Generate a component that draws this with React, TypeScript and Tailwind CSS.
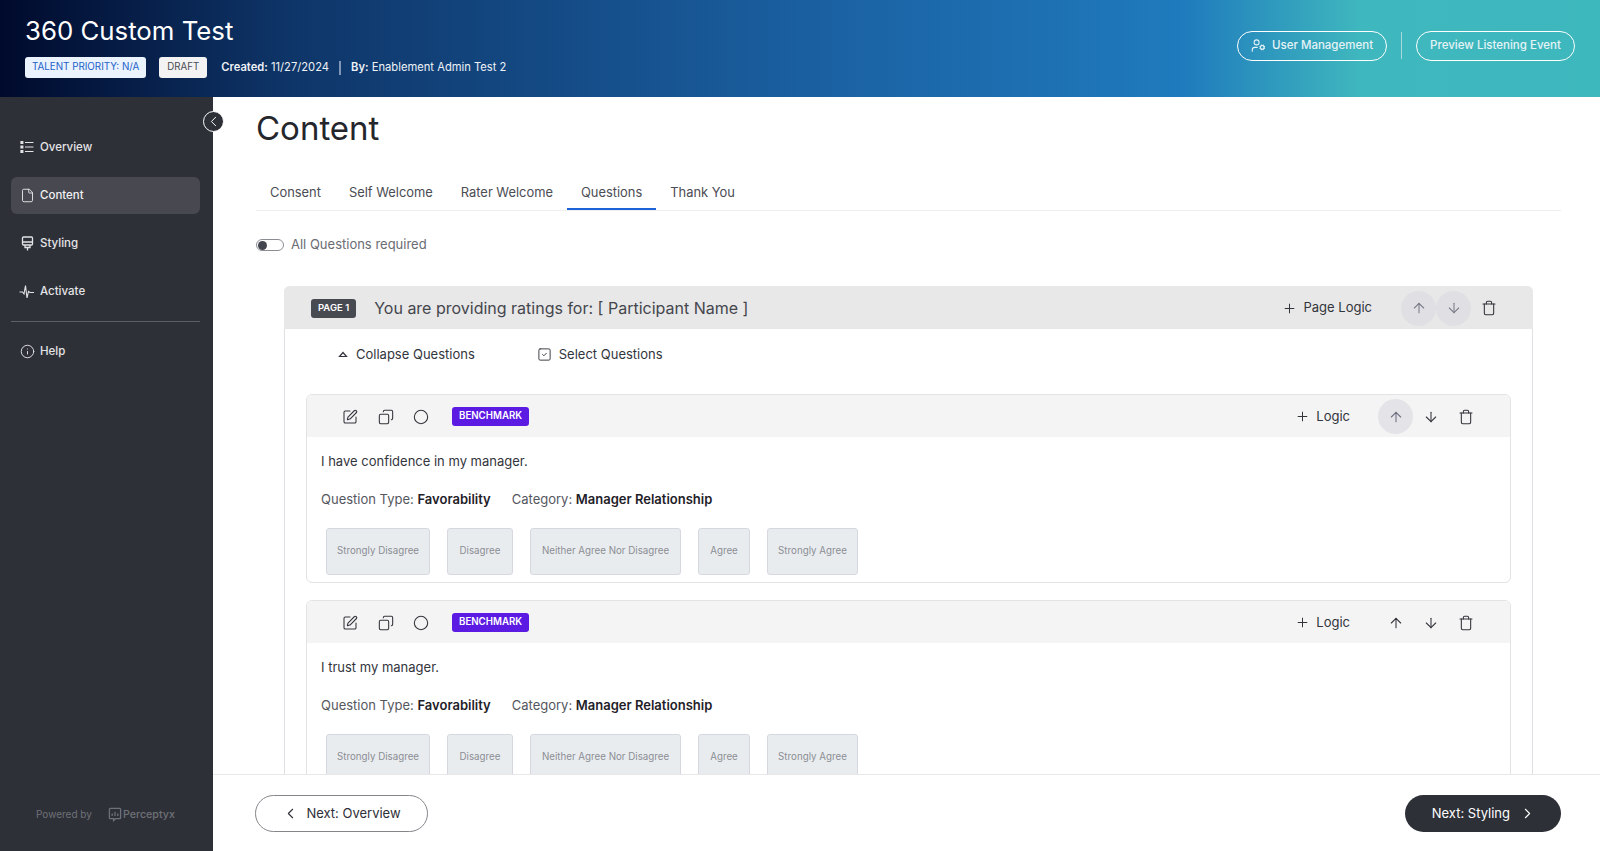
import {
  ArrowDown,
  ArrowUp,
  ChevronLeft,
  ChevronRight,
  Circle,
  Copy,
  File,
  Info,
  Plus,
  SquareCheck,
  SquarePen,
  Trash,
  UserCog,
} from "lucide-react";

const options = [
  { label: "Strongly Disagree", width: "w-[104px]" },
  { label: "Disagree", width: "w-[66px]" },
  { label: "Neither Agree Nor Disagree", width: "w-[151px]" },
  { label: "Agree", width: "w-[52px]" },
  { label: "Strongly Agree", width: "w-[91px]" },
];

function OverviewIcon() {
  return (
    <svg width="14" height="14" viewBox="0 0 14 14" fill="none" stroke="currentColor" strokeWidth="1.2" className="-translate-y-[1px]">
      <path d="M5 2.5h8.5M5 7h8.5M5 11.5h8.5" />
      <path d="M1 1.5h1.8v2H1zM1 6h1.8v2H1zM1 10.5h1.8v2H1z" fill="currentColor" />
    </svg>
  );
}

function StylingIcon() {
  return (
    <svg width="13" height="16" viewBox="0 0 13 16" fill="none" stroke="currentColor" strokeWidth="1.3">
      <rect x="1.5" y="1" width="10" height="8" rx="1" />
      <path d="M1.5 6h10M4 9v2.5h5V9M6.5 11.5v3" />
    </svg>
  );
}

function ActivateIcon() {
  return (
    <svg width="16" height="16" viewBox="0 0 16 16" fill="none" stroke="currentColor" strokeWidth="1.1">
      <path d="M0.5 8h3l1.5 2 1.5-8.5 1.5 12.5 1.5-6.5 1.5 1h4" />
    </svg>
  );
}

function PerceptyxLogo() {
  return (
    <svg width="14" height="15" viewBox="0 0 15 16" fill="none" stroke="currentColor" strokeWidth="1.4">
      <path d="M2.5 1.5h10a1 1 0 0 1 1 1v9a1 1 0 0 1-1 1H8l-2 2v-2H2.5a1 1 0 0 1-1-1v-9a1 1 0 0 1 1-1z" />
      <path d="M4.5 9.5V7M7.5 9.5V5M10.5 9.5V7" />
    </svg>
  );
}

function NavItem({ icon, label, active }: { icon: React.ReactNode; label: string; active?: boolean }) {
  return (
    <div
      className={
        active
          ? "flex h-[37px] items-center gap-[5px] rounded-md bg-[#474850] pl-[8px] text-[#f1f1f2]"
          : "flex h-[37px] items-center gap-[5px] pl-[8px] text-[#e4e4e6]"
      }
    >
      <span className="flex w-[16px] justify-center">{icon}</span>
      <span className="pt-[1px] text-[11.5px] font-medium">{label}</span>
    </div>
  );
}

function QuestionCard({ text, highlightUp }: { text: string; highlightUp?: boolean }) {
  return (
    <div className="mb-[17px] rounded-md border border-[#e2e3e5] bg-white">
      <div className="flex h-[42px] items-center rounded-t-md bg-[#f4f4f4] pl-[35px] pr-[36px] pt-[1px] text-[#33353c]">
        <SquarePen size={16} strokeWidth={1.6} />
        <Copy size={16} strokeWidth={1.6} className="ml-[20px] -scale-x-100" />
        <Circle size={16} strokeWidth={1.6} className="ml-[19px]" />
        <span className="ml-[23px] flex h-[19px] items-center rounded-[3px] bg-[#5b1be3] px-[7px] text-[9.7px] font-semibold text-white">
          BENCHMARK
        </span>
        <div className="ml-auto flex items-center">
          <Plus size={15} strokeWidth={1.6} />
          <span className="ml-[6px] text-[13px]">Logic</span>
          <span
            className={
              highlightUp
                ? "ml-[28px] flex h-[35px] w-[35px] items-center justify-center rounded-full bg-[#e4e4e8] text-[#6d6f80]"
                : "ml-[28px] flex h-[35px] w-[35px] items-center justify-center rounded-full"
            }
          >
            <ArrowUp size={16} strokeWidth={1.6} />
          </span>
          <ArrowDown size={16} strokeWidth={1.6} className="ml-[10px]" />
          <Trash size={16} strokeWidth={1.6} className="ml-[19px]" />
        </div>
      </div>
      <div className="pl-[14px] pt-[15px]">
        <p className="text-[13px] leading-[18px] text-[#33353c]">{text}</p>
        <div className="mt-[20px] flex text-[13px] leading-[18px] text-[#55575e]">
          <span>
            Question Type: <b className="font-semibold text-[#1f2128]">Favorability</b>
          </span>
          <span className="ml-[21px]">
            Category: <b className="font-semibold text-[#1f2128]">Manager Relationship</b>
          </span>
        </div>
        <div className="ml-[5px] mt-[20px] flex gap-[17px] pb-[7px]">
          {options.map((o) => (
            <div
              key={o.label}
              className={`flex h-[47px] items-center justify-center rounded-[3px] border border-[#d5d9df] bg-[#e9ecef] text-[9.75px] text-[#8b8e94] ${o.width}`}
            >
              {o.label}
            </div>
          ))}
        </div>
      </div>
    </div>
  );
}

export default function App() {
  return (
    <div className="flex h-screen flex-col overflow-hidden bg-white font-['Inter',sans-serif]">
      <header className="flex h-[97px] shrink-0 items-center justify-between bg-[linear-gradient(90deg,#000a2c_0%,#0e3568_18%,#1a5fa0_50%,#1f7bbd_74%,#3fb7be_85%,#3db8bd_100%)] pb-[6px] pl-[25px] pr-[25px]">
        <div>
          <h1 className="pt-[1px] text-[25.8px] font-normal leading-[34px] text-white">360 Custom Test</h1>
          <div className="mt-[9px] flex items-center">
            <span className="flex h-[21px] items-center rounded-[3px] bg-[#eaf3fe] px-[7px] text-[9.8px] text-[#1d62c9]">
              TALENT PRIORITY: N/A
            </span>
            <span className="ml-[13px] flex h-[21px] items-center rounded-[3px] bg-[#f3f3f3] px-[8px] text-[9.7px] text-[#4a4c52]">
              DRAFT
            </span>
            <span className="ml-[14px] text-[11.2px] text-[#eef2f7]">
              <b className="font-semibold">Created:</b> 11/27/2024
            </span>
            <span className="ml-[10px] h-[14px] w-[2px] bg-[#7f96b4]" />
            <span className="ml-[10px] text-[11.2px] text-[#eef2f7]">
              <b className="font-semibold">By:</b> Enablement Admin Test 2
            </span>
          </div>
        </div>
        <div className="flex items-center text-[11.5px] font-medium text-[#e6f3f6]">
          <button className="flex h-[30px] w-[150px] items-center justify-center gap-[6px] rounded-full border border-white">
            <UserCog size={15} strokeWidth={1.7} />
            User Management
          </button>
          <span className="ml-[14px] h-[27px] w-px bg-[#a9d8de]" />
          <button className="ml-[14px] flex h-[30px] w-[159px] items-center justify-center rounded-full border border-white">
            Preview Listening Event
          </button>
        </div>
      </header>

      <div className="flex min-h-0 flex-1">
        <aside className="relative flex w-[213px] shrink-0 flex-col bg-[#2e3038] pl-[11px] pr-[13px] pt-[32px]">
          <button className="absolute right-[-11px] top-[14px] flex h-[21px] w-[21px] items-center justify-center rounded-full border border-white bg-[#2e3038] text-white">
            <ChevronLeft size={17} strokeWidth={1.4} />
          </button>
          <NavItem icon={<OverviewIcon />} label="Overview" />
          <div className="mt-[11px]">
            <NavItem active icon={<File size={15} strokeWidth={1.4} />} label="Content" />
          </div>
          <div className="mt-[11px]">
            <NavItem icon={<StylingIcon />} label="Styling" />
          </div>
          <div className="mt-[11px]">
            <NavItem icon={<ActivateIcon />} label="Activate" />
          </div>
          <div className="mt-[11px] border-t border-[#5d5e66] pt-[11px]">
            <NavItem icon={<Info size={15} strokeWidth={1.5} />} label="Help" />
          </div>
          <div className="mt-auto flex items-center pb-[28px] pl-[25px] text-[#6e7077]">
            <span className="text-[10px]">Powered by</span>
            <span className="ml-[16px] flex items-center gap-[1px] text-[10.7px] font-medium">
              <PerceptyxLogo />
              Perceptyx
            </span>
          </div>
        </aside>

        <main className="flex min-w-0 flex-1 flex-col">
          <div className="min-h-0 flex-1 overflow-hidden pl-[43px] pr-[39px]">
            <h2 className="pt-[10px] text-[33px] font-normal leading-[42px] text-[#24262c]">Content</h2>
            <div className="mt-[27px] flex h-[35px] border-b border-[#efefef] text-[12.9px] text-[#4b4d54]">
              <span className="flex h-[34px] items-center px-[14px]">Consent</span>
              <span className="flex h-[34px] items-center px-[14px]">Self Welcome</span>
              <span className="flex h-[34px] items-center px-[14px]">Rater Welcome</span>
              <span className="flex h-[34px] items-center border-b-2 border-[#1d62d8] px-[14px] pt-[2px]">Questions</span>
              <span className="flex h-[34px] items-center px-[14px]">Thank You</span>
            </div>
            <div className="mt-[27px] flex h-[14px] items-center">
              <span className="flex h-[12px] w-[28px] items-center rounded-full border border-[#8b8d94] bg-white">
                <span className="ml-px h-[9px] w-[9px] rounded-full bg-[#44464f]" />
              </span>
              <span className="ml-[7px] text-[13px] text-[#6a6c73]">All Questions required</span>
            </div>
            <section className="ml-[28px] mr-[28px] mt-[34px] rounded-t-md border border-t-0 border-[#dfe0e3]">
              <div className="-mx-px flex h-[43px] items-center rounded-t-md bg-[#e8e8e8] pl-[27px] pr-[36px] pt-[1px]">
                <span className="flex h-[19px] items-center rounded-[3px] bg-[#484a52] px-[7px] text-[9.5px] font-semibold text-white">
                  PAGE 1
                </span>
                <span className="ml-[18px] text-[16px] text-[#44464d]">You are providing ratings for: [ Participant Name ]</span>
                <div className="ml-auto flex items-center text-[#33353c]">
                  <Plus size={15} strokeWidth={1.6} />
                  <span className="ml-[6px] text-[13px]">Page Logic</span>
                  <span className="ml-[29px] flex h-[35px] w-[35px] items-center justify-center rounded-full bg-[#e0e0e4] text-[#7a7c8a]">
                    <ArrowUp size={16} strokeWidth={1.6} />
                  </span>
                  <span className="flex h-[35px] w-[35px] items-center justify-center rounded-full bg-[#e0e0e4] text-[#7a7c8a]">
                    <ArrowDown size={16} strokeWidth={1.6} />
                  </span>
                  <Trash size={16} strokeWidth={1.6} className="ml-[10px]" />
                </div>
              </div>
              <div className="flex h-[50px] items-center pl-[53px] pt-[1px] text-[13px] text-[#33353c]">
                <svg width="10" height="7" viewBox="0 0 10 7" fill="none" stroke="currentColor" strokeWidth="1.2">
                  <path d="M1.5 5.5h7L5 1.5z" />
                </svg>
                <span className="ml-[8px]">Collapse Questions</span>
                <SquareCheck size={15} strokeWidth={1.5} className="ml-[62px]" />
                <span className="ml-[7px]">Select Questions</span>
              </div>
              <div className="ml-[21px] mr-[21px] mt-[15px]">
                <QuestionCard text="I have confidence in my manager." highlightUp />
                <QuestionCard text="I trust my manager." />
              </div>
            </section>
          </div>
          <footer className="relative z-10 flex h-[77px] shrink-0 items-center justify-between border-t border-[#e8e8e8] bg-white pl-[42px] pr-[39px] text-[13px]">
            <button className="flex h-[37px] w-[173px] items-center justify-center gap-[7px] rounded-full border border-[#85868a] text-[#2e3038]">
              <ChevronLeft size={17} strokeWidth={1.5} />
              <span className="pt-[1px]">Next: Overview</span>
            </button>
            <button className="flex h-[37px] w-[156px] items-center justify-end gap-[9px] rounded-full bg-[#2e3038] pr-[25px] text-white">
              <span className="pt-[1px]">Next: Styling</span>
              <ChevronRight size={17} strokeWidth={1.5} />
            </button>
          </footer>
        </main>
      </div>
    </div>
  );
}
